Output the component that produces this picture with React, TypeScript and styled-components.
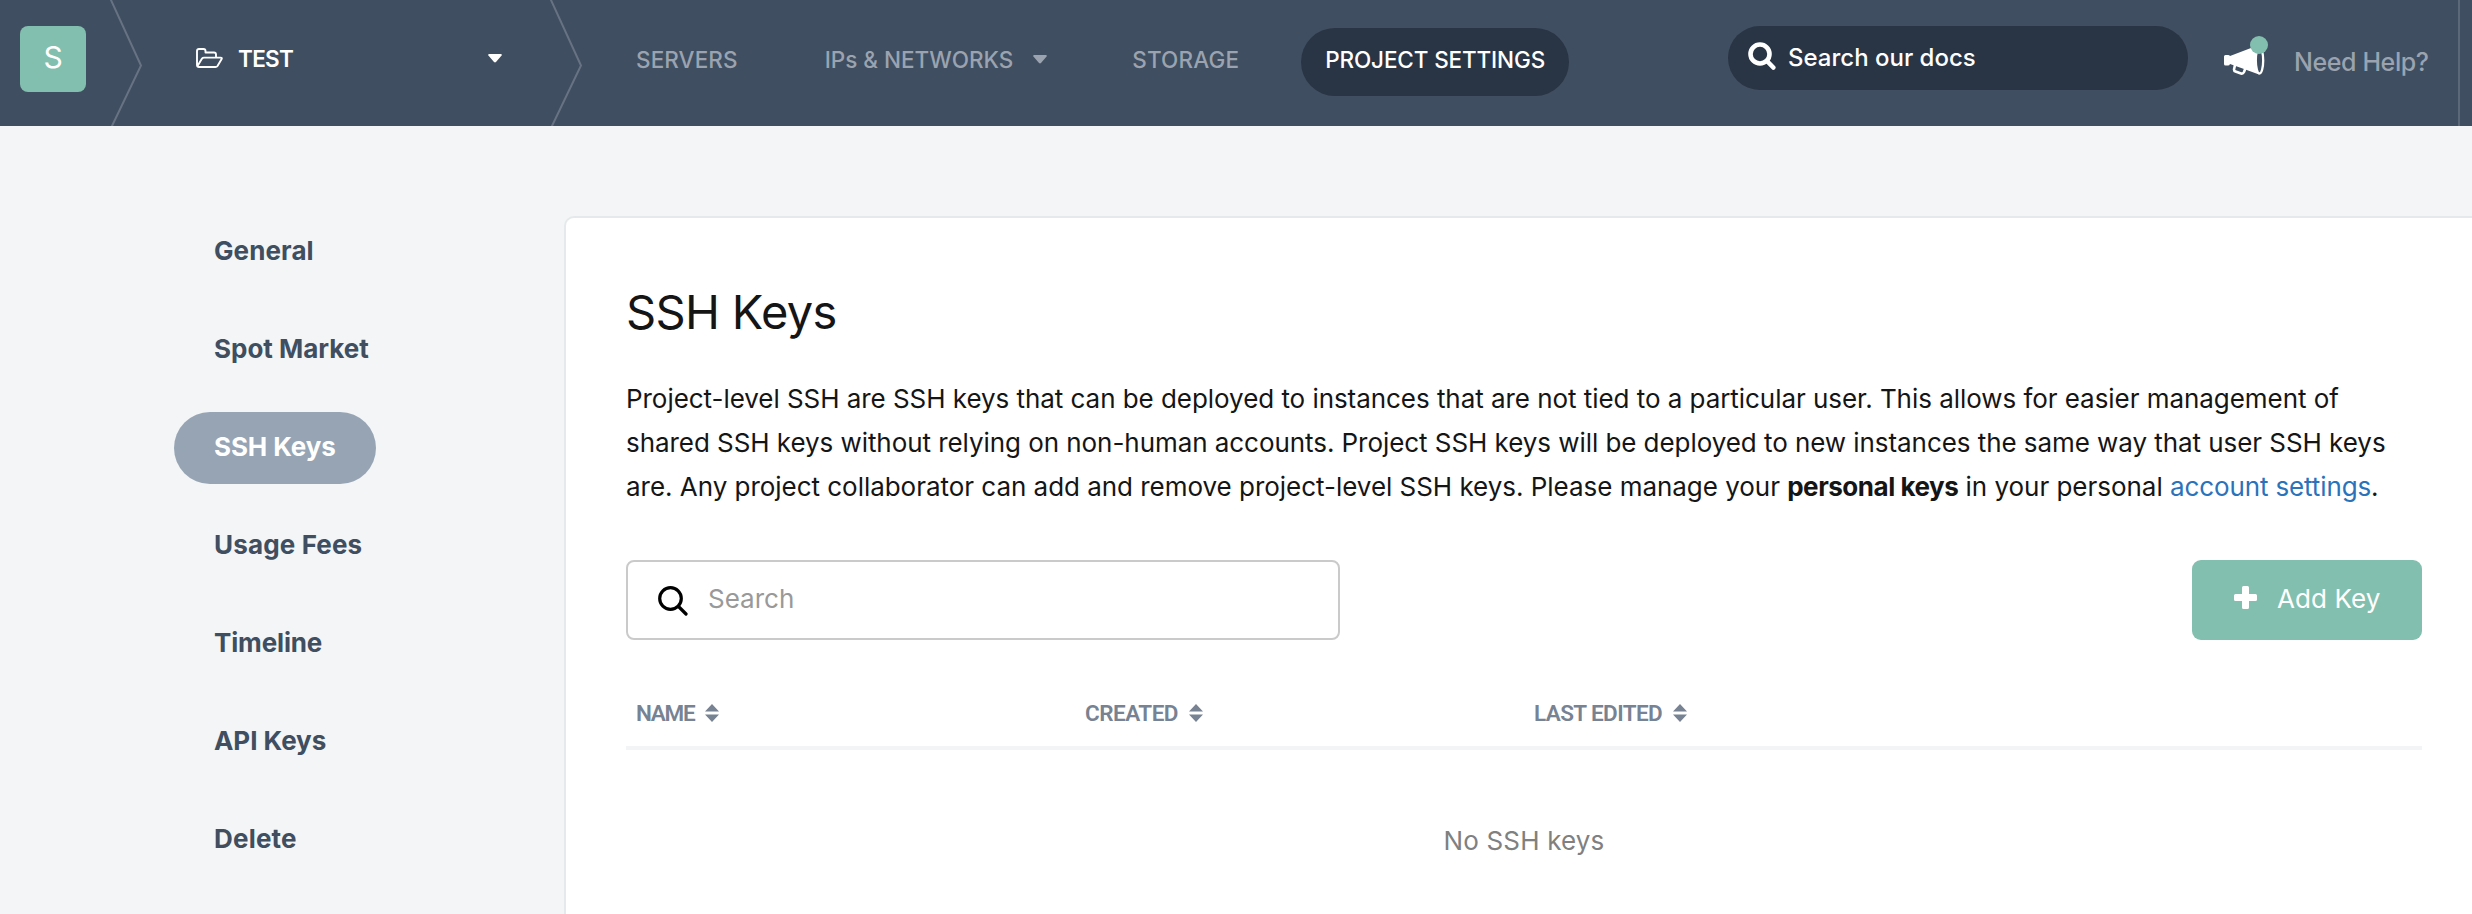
import React from "react";
import styled, { createGlobalStyle } from "styled-components";

const GlobalStyle = createGlobalStyle`
  * { box-sizing: border-box; }
  body {
    margin: 0;
    background: #f3f5f7;
    color: #151515;
    font-family: Inter, "Liberation Sans", sans-serif;
    overflow: hidden;
  }
`;

const Page = styled.div`
  height: 914px;
  display: flex;
  flex-direction: column;
  overflow: hidden;
`;

const TopBar = styled.header`
  height: 126px;
  flex: none;
  display: flex;
  background: #3f4e60;
  color: #fff;
`;

const Avatar = styled.div`
  width: 66px;
  height: 66px;
  margin: 26px 24px 0 20px;
  border-radius: 8px;
  background: #83bfae;
  font-size: 30px;
  line-height: 63px;
  text-align: center;
`;

const Chevron = styled.svg`
  flex: none;
  width: 34px;
  height: 126px;
  fill: none;
  stroke: #677384;
  stroke-width: 2;
`;

const ProjectSelect = styled.div`
  width: 406px;
  height: 116px;
  padding: 0 48px 0 52px;
  display: flex;
  align-items: center;
`;

const ProjectName = styled.span`
  flex: 1;
  margin-left: 15px;
  font-size: 22.5px;
  font-weight: 600;
  letter-spacing: -0.7px;
`;

const Caret = styled.svg`
  width: 14px;
  height: 9px;
  fill: currentColor;
`;

const Nav = styled.nav`
  display: flex;
  align-items: flex-start;
  padding-top: 28px;
  margin-left: 28px;
`;

const NavItem = styled.a<{ $active?: boolean; $track?: number; $gap?: number }>`
  height: 68px;
  padding: 0 24px 5px;
  margin-right: ${(p) => p.$gap ?? 0}px;
  display: flex;
  align-items: center;
  gap: 20px;
  border-radius: 34px;
  font-size: 22.5px;
  font-weight: 500;
  white-space: nowrap;
  letter-spacing: ${(p) => p.$track ?? 0}px;
  color: ${(p) => (p.$active ? "#fff" : "#9aa3af")};
  background: ${(p) => (p.$active ? "#293444" : "transparent")};
`;

const DocsSearch = styled.div`
  width: 460px;
  height: 64px;
  margin: 26px 36px 0 auto;
  padding: 0 20px 2px;
  display: flex;
  align-items: center;
  gap: 12px;
  border-radius: 32px;
  background: #293444;
  font-size: 24px;
  font-weight: 500;
`;

const DocsIcon = styled.svg`
  width: 28px;
  height: 28px;
  margin-top: -2px;
  fill: none;
  stroke: #fff;
  stroke-width: 4.6;
  stroke-linecap: round;
`;

const Announcements = styled.svg`
  width: 46px;
  height: 42px;
  margin-top: 35px;
`;

const Help = styled.a`
  width: 190px;
  padding: 46px 0 0 24px;
  border-right: 2px solid #5a6879;
  margin-right: 12px;
  color: #9aa3af;
  font-size: 25px;
  font-weight: 500;
  line-height: 32px;
  letter-spacing: -0.4px;
  white-space: nowrap;
`;

const Body = styled.div`
  flex: 1;
  min-height: 0;
  display: flex;
`;

const Sidebar = styled.aside`
  width: 564px;
  flex: none;
  padding: 90px 0 0 174px;
  display: flex;
  flex-direction: column;
  align-items: flex-start;
  gap: 26px;
`;

const SideLink = styled.a<{ $active?: boolean; $track?: number }>`
  height: 72px;
  padding: 0 40px;
  border-radius: 36px;
  font-size: 26px;
  font-weight: 700;
  line-height: 70px;
  letter-spacing: ${(p) => p.$track ?? 0}px;
  color: ${(p) => (p.$active ? "#fff" : "#3f4e60")};
  background: ${(p) => (p.$active ? "#96a4b4" : "transparent")};
`;

const Panel = styled.main`
  flex: 1;
  margin-top: 90px;
  padding: 66px 50px 0 60px;
  border: 2px solid #e6e9eb;
  border-width: 2px 0 0 2px;
  border-top-left-radius: 10px;
  background: #fff;
`;

const Title = styled.h1`
  margin: 0;
  font-size: 47px;
  font-weight: 400;
  line-height: 56px;
  letter-spacing: -0.65px;
`;

const Intro = styled.p`
  margin: 37px 0 0;
  font-size: 26px;
  line-height: 44px;
`;

const Line = styled.span<{ $track: number }>`
  display: block;
  white-space: nowrap;
  letter-spacing: ${(p) => p.$track}px;
`;

const Strong = styled.strong`
  font-weight: 700;
  letter-spacing: -0.47px;
`;

const Link = styled.a`
  color: #2c72ba;
  letter-spacing: -0.12px;
`;

const Tools = styled.div`
  margin-top: 51px;
  display: flex;
  justify-content: space-between;
`;

const SearchBox = styled.div`
  width: 714px;
  height: 80px;
  padding: 0 30px 3px;
  display: flex;
  align-items: center;
  gap: 20px;
  border: 2px solid #cacaca;
  border-radius: 8px;
  color: #999;
  font-size: 26px;
`;

const SearchIcon = styled.svg`
  width: 30px;
  height: 30px;
  margin-top: 5px;
  fill: none;
  stroke: #000;
  stroke-width: 3.2;
  stroke-linecap: round;
`;

const AddButton = styled.button`
  width: 230px;
  height: 80px;
  padding: 0 0 3px 42px;
  display: flex;
  align-items: center;
  gap: 20px;
  border: 0;
  border-radius: 9px;
  background: #83bfae;
  color: #fff;
  font: 400 26px Inter, sans-serif;
  letter-spacing: 0.1px;
`;

const PlusIcon = styled.svg`
  width: 23px;
  height: 23px;
  margin-top: -2px;
  fill: #fff;
`;

const TableHead = styled.div`
  height: 110px;
  padding: 38px 0 0 10px;
  display: grid;
  grid-template-columns: 449px 449px 1fr;
  border-bottom: 4px solid #f3f4f5;
`;

const HeadCell = styled.div<{ $track: number }>`
  height: 70px;
  display: flex;
  align-items: center;
  gap: 11px;
  color: #778292;
  font: 600 22.5px Roboto, sans-serif;
  letter-spacing: ${(p) => p.$track}px;
`;

const SortIcon = styled.svg`
  width: 14px;
  height: 18px;
  margin-top: -1px;
  fill: currentColor;
`;

const Empty = styled.div`
  margin-top: 75px;
  text-align: center;
  color: #808080;
  font-size: 26px;
  line-height: 32px;
  letter-spacing: 0.17px;
`;

const Crumb = () => (
  <Chevron viewBox="0 0 34 126">
    <path d="M.5 -1L31 65.5L1.500 127" />
  </Chevron>
);

const Down = () => (
  <Caret viewBox="0 0 14 9">
    <path d="M1 0h12q1.500 .6 .6 1.600L8 8.100q-1 .9-2 0L.4 1.600Q-.5 .6 1 0z" />
  </Caret>
);

const links: { label: string; track: number; active?: boolean }[] = [
  { label: "General", track: 0.1 },
  { label: "Spot Market", track: 0 },
  { label: "SSH Keys", track: -0.1, active: true },
  { label: "Usage Fees", track: 0.15 },
  { label: "Timeline", track: -0.15 },
  { label: "API Keys", track: -0.05 },
  { label: "Delete", track: 0.2 },
];

const columns = [
  { label: "NAME", track: -1.3 },
  { label: "CREATED", track: -0.5 },
  { label: "LAST EDITED", track: -0.6 },
];

export default function App() {
  return (
    <Page>
      <GlobalStyle />
      <TopBar>
        <Avatar>S</Avatar>
        <Crumb />
        <ProjectSelect>
          <svg width="27" height="20" viewBox="0 0 27 20" fill="none" stroke="#fff" strokeWidth="1.900" strokeLinejoin="round">
            <path d="M1 17V3q0-2 2-2h4.500q2 0 2 2v1.500h8.500q2 0 2 2V9.500M1.500 18L6 10.600q.7-1 2-1h16.500q2 0 1 1.700L21.500 18q-.7 1-2 1H3q-2 0-2-2" />
          </svg>
          <ProjectName>TEST</ProjectName>
          <Down />
        </ProjectSelect>
        <Crumb />
        <Nav>
          <NavItem $gap={39} $track={0.1}>SERVERS</NavItem>
          <NavItem $gap={37}>IPs &amp; NETWORKS<Down /></NavItem>
          <NavItem $gap={38} $track={0.15}>STORAGE</NavItem>
          <NavItem $active $track={-0.13}>PROJECT SETTINGS</NavItem>
        </Nav>
        <DocsSearch>
          <DocsIcon viewBox="0 0 28 28">
            <circle cx="12" cy="12" r="9.500" />
            <path d="M19 19l6.300 6.500" />
          </DocsIcon>
          Search our docs
        </DocsSearch>
        <Announcements viewBox="0 0 46 42">
          <path fill="#fff" d="M1.500 20H4Q5.500 20 6 21L27 13L35 11V39.500L20 34L6 29Q5.500 30.500 4 30.500H1.500Q0 30.500 0 29V21.500Q0 20 1.500 20z" />
          <path d="M11 30L10 34.500Q10 36 11.500 36.500L17 38.500Q19 39 20 37L21.500 33" fill="none" stroke="#fff" strokeWidth="2.600" strokeLinejoin="round" />
          <ellipse cx="35.500" cy="25.500" rx="3.700" ry="13" fill="#3f4e60" stroke="#fff" strokeWidth="2.300" />
          <circle cx="35" cy="10" r="9" fill="#83bfae" />
        </Announcements>
        <Help>Need Help?</Help>
      </TopBar>
      <Body>
        <Sidebar>
          {links.map((l) => (
            <SideLink key={l.label} $active={l.active} $track={l.track}>{l.label}</SideLink>
          ))}
        </Sidebar>
        <Panel>
          <Title>SSH Keys</Title>
          <Intro>
            <Line $track={-0.05}>Project-level SSH are SSH keys that can be deployed to instances that are not tied to a particular user. This allows for easier management of</Line>
            <Line $track={-0.06}>shared SSH keys without relying on non-human accounts. Project SSH keys will be deployed to new instances the same way that user SSH keys</Line>
            <Line $track={-0.03}>
              are. Any project collaborator can add and remove project-level SSH keys. Please manage your <Strong>personal keys</Strong> in your personal <Link>account settings</Link>.
            </Line>
          </Intro>
          <Tools>
            <SearchBox>
              <SearchIcon viewBox="0 0 30 30">
                <circle cx="12.500" cy="12.500" r="10.800" />
                <path d="M20.500 20.500L28 28" />
              </SearchIcon>
              Search
            </SearchBox>
            <AddButton>
              <PlusIcon viewBox="0 0 23 23">
                <path d="M9.500 0h4q1.500 0 1.500 1.500V8h6.500Q23 8 23 9.500v4q0 1.500-1.500 1.500H15v6.500q0 1.500-1.500 1.500h-4Q8 23 8 21.500V15H1.500Q0 15 0 13.500v-4Q0 8 1.500 8H8V1.500Q8 0 9.500 0z" />
              </PlusIcon>
              Add Key
            </AddButton>
          </Tools>
          <TableHead>
            {columns.map((c) => (
              <HeadCell key={c.label} $track={c.track}>
                {c.label}
                <SortIcon viewBox="0 0 14 18">
                  <path d="M7 0L14 7.500H0zM7 18L0 10.500H14z" />
                </SortIcon>
              </HeadCell>
            ))}
          </TableHead>
          <Empty>No SSH keys</Empty>
        </Panel>
      </Body>
    </Page>
  );
}
